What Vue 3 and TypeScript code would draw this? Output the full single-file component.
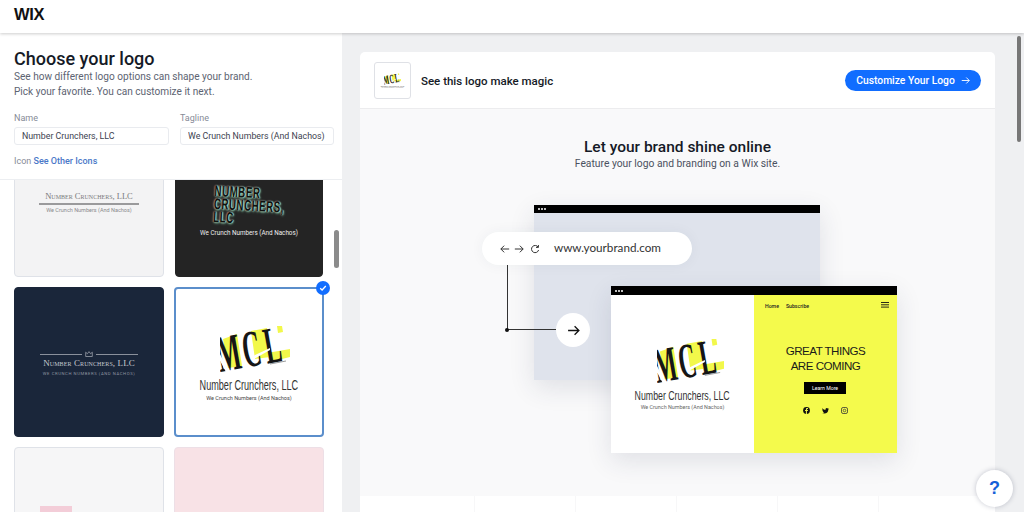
<template>
  <div class="app">
    <svg class="defs" aria-hidden="true">
      <symbol id="mcl" viewBox="0 0 70 46">
        <polygon points="3,13 17,8 22,40 8,42" fill="#f2f84a" />
        <polygon points="31,5 47,2 50,31 35,33" fill="#f2f84a" />
        <polygon points="47,27 70,23 70,31 50,36" fill="#f2f84a" />
        <polygon points="57,0 62,0 63,6 58,7" fill="#f2f84a" />
        <g transform="translate(0 46) rotate(-10) scale(.48 1)">
          <text class="mcl-text" x="0 54 100" y="0">MCL</text>
        </g>
        <polygon points="-2,24 9,46 6,46 -2,31" fill="#fff" />
        <polygon points="31,31 50,22 50,24 32,34" fill="#fff" />
        <line x1="50" y1="38" x2="66" y2="35" stroke="#555" stroke-width=".6" />
      </symbol>
      <symbol id="arrow" viewBox="0 0 12 12">
        <path d="M1 6h10M7 2l4 4-4 4" fill="none" stroke="currentColor" stroke-width="1.2" />
      </symbol>
    </svg>

    <header class="topbar">
      <span class="wix">WIX</span>
    </header>

    <main class="main">
      <aside class="side">
        <div class="intro">
          <h1>Choose your logo</h1>
          <p>See how different logo options can shape your brand.<br />Pick your favorite. You can customize it next.</p>
          <div class="fields">
            <label>
              <span>Name</span>
              <input type="text" value="Number Crunchers, LLC" />
            </label>
            <label>
              <span>Tagline</span>
              <input type="text" value="We Crunch Numbers (And Nachos)" />
            </label>
          </div>
          <div class="icon-row">Icon <a>See Other Icons</a></div>
        </div>

        <div class="list">
          <div class="grid">
            <div class="tile tile-light">
              <div class="serif-name">Number Crunchers, LLC</div>
              <div class="rule"></div>
              <div class="tag">We Crunch Numbers (And Nachos)</div>
            </div>
            <div class="tile tile-dark">
              <div class="glow">NUMBER<br />CRUNCHERS,<br />LLC</div>
              <div class="tag">We Crunch Numbers (And Nachos)</div>
            </div>
            <div class="tile tile-navy">
              <div class="crown-row">
                <span></span>
                <svg width="8" height="7" viewBox="0 0 8 7"><path d="M.7 1.2l1.7 1.6L4 .6l1.6 2.2 1.7-1.6v4.3H.7z" fill="none" stroke="#aeb2ba" stroke-width=".7" /></svg>
                <span></span>
              </div>
              <div class="serif-name">Number Crunchers, LLC</div>
              <div class="tag">WE CRUNCH NUMBERS (AND NACHOS)</div>
            </div>
            <div class="tile tile-picked">
              <svg class="mcl" width="70" height="46"><use href="#mcl" /></svg>
              <div class="narrow-name">Number Crunchers, LLC</div>
              <div class="tag">We Crunch Numbers (And Nachos)</div>
              <span class="check">
                <svg width="8" height="8" viewBox="0 0 8 8"><path d="M1.2 4.2l1.9 1.8 3.7-4" fill="none" stroke="#fff" stroke-width="1.3" /></svg>
              </span>
            </div>
            <div class="tile tile-soft"><div class="pink-box"></div></div>
            <div class="tile tile-pink"></div>
          </div>
          <div class="thumb"></div>
        </div>
      </aside>

      <section class="preview">
        <div class="panel">
          <div class="panel-head">
            <div class="mini">
              <svg width="17" height="12"><use href="#mcl" /></svg>
              <span class="mini-name">Number Crunchers, LLC</span>
              <span class="mini-tag">We Crunch Numbers (And Nachos)</span>
            </div>
            <div class="panel-title">See this logo make magic</div>
            <button class="cta">
              Customize Your Logo
              <svg width="9" height="9"><use href="#arrow" /></svg>
            </button>
          </div>

          <div class="panel-body">
            <h2>Let your brand shine online</h2>
            <p>Feature your logo and branding on a Wix site.</p>

            <div class="stage">
              <div class="win back">
                <div class="win-bar"><i></i><i></i><i></i></div>
              </div>
              <div class="wire"></div>
              <span class="wire-dot"></span>
              <div class="url">
                <svg width="10" height="10"><use href="#arrow" transform="rotate(180 5 5)" /></svg>
                <svg width="10" height="10"><use href="#arrow" /></svg>
                <svg class="reload" width="10" height="10" viewBox="0 0 10 10"><path d="M8.2 3.2A3.6 3.6 0 1 0 8.6 6M8.4 1v2.4H6" fill="none" stroke="#333" stroke-width="1" /></svg>
                <span>www.yourbrand.com</span>
              </div>
              <div class="go"><svg width="13" height="13"><use href="#arrow" /></svg></div>

              <div class="win front">
                <div class="win-bar"><i></i><i></i><i></i></div>
                <div class="site">
                  <div class="site-left">
                    <svg class="site-logo" width="67" height="44"><use href="#mcl" /></svg>
                    <div class="narrow-name">Number Crunchers, LLC</div>
                    <div class="tag">We Crunch Numbers (And Nachos)</div>
                  </div>
                  <div class="site-right">
                    <nav class="site-nav">
                      <span>Home</span><span>Subscribe</span>
                      <svg width="8" height="6" viewBox="0 0 8 6"><path d="M0 .5h8M0 2.8h8M0 5.1h8" stroke="#111" stroke-width=".9" /></svg>
                    </nav>
                    <div class="great">GREAT THINGS<br />ARE COMING</div>
                    <div class="learn">Learn More</div>
                    <div class="socials">
                      <svg width="7" height="7" viewBox="0 0 7 7"><circle cx="3.5" cy="3.5" r="3.4" fill="#111" /><path d="M3.9 7V4h1l.1-1H3.9v-.6c0-.3.1-.5.5-.5H5V1h-.8C3.3 1 2.9 1.5 2.9 2.3V3H2v1h.9v3z" fill="#f2f84a" /></svg>
                      <svg width="7" height="6" viewBox="0 0 7 6"><path d="M7 .8c-.3.1-.5.2-.8.2.3-.2.5-.4.6-.8-.3.2-.6.3-.9.4A1.4 1.4 0 0 0 3.5 1.900C2.300 1.800 1.300 1.300.5.300c-.4.7-.2 1.400.4 1.900-.2 0-.4-.1-.6-.2 0 .7.4 1.200 1.100 1.400-.2.1-.4.1-.6 0 .2.6.7.9 1.300 1-.6.5-1.300.7-2.100.6C3.800 6.200 6.400 4.500 6.300 1.500c.3-.2.5-.4.7-.7z" fill="#111" /></svg>
                      <svg width="7" height="7" viewBox="0 0 7 7"><rect x=".5" y=".5" width="6" height="6" rx="1.6" fill="none" stroke="#333" stroke-width=".8" /><circle cx="3.5" cy="3.5" r="1.3" fill="none" stroke="#333" stroke-width=".7" /></svg>
                    </div>
                  </div>
                </div>
              </div>
            </div>
          </div>

          <div class="panel-foot">
            <span v-for="n in ticks" :key="n" class="tick"></span>
          </div>
        </div>
        <div class="page-thumb"></div>
      </section>
    </main>

    <button class="help">?</button>
  </div>
</template>

<script setup lang="ts">
const ticks: number = 6;
</script>

<style>
html,
body {
  margin: 0;
  overflow: hidden;
  background: #fff;
}
</style>

<style scoped>
.app {
  position: relative;
  width: 1024px;
  height: 512px;
  overflow: hidden;
  display: flex;
  flex-direction: column;
  font-family: Roboto, "Noto Sans", sans-serif;
  color: #151a26;
}
.defs {
  display: none;
}
.mcl-text {
  font-family: "Liberation Serif", serif;
  font-weight: 700;
  font-size: 52px;
  fill: #161616;
}
.topbar {
  height: 33px;
  flex: none;
  display: flex;
  align-items: center;
  padding-left: 14px;
  padding-bottom: 5px;
  box-sizing: border-box;
  background: #fff;
  box-shadow: 0 1px 3px rgba(0, 0, 0, 0.2);
  position: relative;
  z-index: 2;
}
.wix {
  font-family: "Liberation Sans", sans-serif;
  font-weight: 700;
  font-size: 16.5px;
  letter-spacing: -0.3px;
  color: #111;
}
.main {
  flex: 1;
  display: flex;
  min-height: 0;
}
.side {
  width: 342px;
  flex: none;
  background: #fff;
  display: flex;
  flex-direction: column;
}
.intro {
  padding: 16px 8px 0 14px;
  height: 147px;
  box-sizing: border-box;
  flex: none;
  border-bottom: 1px solid #eceef1;
}
h1 {
  margin: 0;
  font-size: 18px;
  line-height: 20px;
  font-weight: 500;
}
.intro p {
  margin: 1px 0 0;
  font-size: 10.1px;
  line-height: 14.5px;
  color: #5d6472;
}
.fields {
  display: grid;
  grid-template-columns: 155px 154px;
  gap: 11px;
  margin-top: 14px;
}
.fields label {
  display: flex;
  flex-direction: column;
  gap: 3px;
}
.fields span,
.icon-row {
  font-size: 9px;
  line-height: 11px;
  color: #868b97;
}
.fields input {
  height: 18px;
  box-sizing: border-box;
  width: 100%;
  border: 1px solid #e9ebef;
  border-radius: 3px;
  padding: 0 7px;
  font-family: inherit;
  font-size: 8.8px;
  color: #3c4250;
  background: #fff;
  outline: none;
}
.icon-row {
  margin-top: 11px;
}
.icon-row a {
  color: #4a78c8;
  font-weight: 500;
}
.list {
  position: relative;
  flex: 1;
  overflow: hidden;
  padding-left: 14px;
}
.grid {
  display: grid;
  grid-template-columns: 150px 150px;
  grid-auto-rows: 150px;
  gap: 10px;
  margin-top: -53px;
}
.tile {
  position: relative;
  box-sizing: border-box;
  border-radius: 4px;
  border: 1px solid #dfe2e8;
  display: flex;
  flex-direction: column;
  align-items: center;
}
.tag {
  font-size: 5.5px;
  line-height: 7px;
  white-space: nowrap;
}
.serif-name {
  font-family: "Liberation Serif", serif;
  font-variant: small-caps;
  white-space: nowrap;
}
.narrow-name {
  font-family: "Liberation Sans", sans-serif;
  white-space: nowrap;
  color: #333;
  transform: scaleX(0.65);
}
.tile-light {
  background: #f3f3f4;
  padding-top: 61px;
}
.tile-light .serif-name {
  font-size: 8.5px;
  line-height: 12px;
  color: #7a7a7c;
  margin-top: 1px;
}
.rule {
  width: 100px;
  height: 2px;
  margin: 1px 0 2px;
  background: #9a9a9c;
}
.tile-light .tag {
  color: #8a8a8c;
}
.tile-dark {
  background: #242424;
  border-color: #242424;
  padding-top: 56px;
  margin: 0 1px;
}
.glow {
  align-self: flex-start;
  margin-left: 39px;
  width: 100px;
  font-family: "Liberation Sans", sans-serif;
  font-weight: 700;
  font-size: 15.5px;
  line-height: 13px;
  letter-spacing: 1px;
  color: #0f1110;
  white-space: nowrap;
  transform-origin: left top;
  transform: rotate(3deg) scaleX(0.62);
  text-shadow: 1.5px 0 1.5px #b4ecd0, 1px 1px 3px #7fcfa8, -1px 0 2px #c07a84;
}
.tile-dark .tag {
  color: #eee;
  font-size: 6.3px;
  margin-top: 7px;
}
.tile-navy {
  background: #1a263a;
  border-color: #1a263a;
  padding-top: 63px;
}
.crown-row {
  display: flex;
  align-items: center;
  gap: 3px;
}
.crown-row span {
  width: 42px;
  height: 1px;
  background: #8a909b;
}
.tile-navy .serif-name {
  font-size: 9px;
  line-height: 11px;
  color: #c4c8cf;
  letter-spacing: 0.1px;
}
.tile-navy .tag {
  font-size: 4.2px;
  line-height: 8px;
  margin-top: 1px;
  letter-spacing: 0.6px;
  color: #8f95a1;
}
.tile-picked {
  background: #fff;
  border: 2px solid #5b8ecb;
  padding-top: 37px;
}
.mcl {
  flex: none;
  margin-left: 12px;
}
.tile-picked .narrow-name {
  font-size: 14px;
  line-height: 16px;
  margin-top: 5px;
}
.tile-picked .tag {
  color: #444;
  margin-top: 2px;
}
.check {
  position: absolute;
  top: -8px;
  right: -8px;
  width: 14px;
  height: 14px;
  border-radius: 50%;
  background: #116dff;
  display: flex;
  align-items: center;
  justify-content: center;
}
.tile-soft {
  background: #f6f6f7;
  align-items: flex-start;
  padding: 58px 0 0 25px;
}
.pink-box {
  width: 32px;
  height: 32px;
  background: #f3cdd8;
}
.tile-pink {
  background: #f8e2e6;
  border-color: #eddfe6;
}
.thumb {
  position: absolute;
  left: 334px;
  top: 50px;
  width: 5px;
  height: 38px;
  border-radius: 3px;
  background: #8b8b8b;
}
.preview {
  position: relative;
  flex: 1;
  background: #eff0f2;
  padding: 19px 29px 0 18px;
  overflow: hidden;
}
.page-thumb {
  position: absolute;
  top: 3px;
  right: 3px;
  width: 4px;
  height: 106px;
  border-radius: 3px;
  background: #777;
}
.panel {
  border-radius: 5px 5px 0 0;
  overflow: hidden;
  background: #fff;
}
.panel-head {
  height: 57px;
  box-sizing: border-box;
  display: flex;
  align-items: center;
  padding: 0 14px;
  border-bottom: 1px solid #ececee;
}
.mini {
  width: 37px;
  height: 37px;
  box-sizing: border-box;
  border: 1px solid #dfe1e6;
  border-radius: 3px;
  display: flex;
  flex-direction: column;
  align-items: center;
  padding-top: 10px;
  overflow: hidden;
}
.mini-name,
.mini-tag {
  font-family: "Liberation Sans", sans-serif;
  line-height: 2.5px;
  white-space: nowrap;
  color: #555;
}
.mini-name {
  font-size: 2.2px;
}
.mini-tag {
  font-size: 1.4px;
  color: #888;
}
.panel-title {
  margin-left: 10px;
  padding-top: 1px;
  font-size: 11.5px;
  font-weight: 500;
  flex: 1;
}
.cta {
  height: 21px;
  width: 136px;
  border: none;
  border-radius: 11px;
  background: #116dff;
  color: #fff;
  display: flex;
  align-items: center;
  justify-content: center;
  gap: 6px;
  font-family: inherit;
  font-size: 10.3px;
  font-weight: 500;
  padding: 0;
}
.panel-body {
  height: 387px;
  background: #f9f9fa;
  padding-top: 29px;
  box-sizing: border-box;
  display: flex;
  flex-direction: column;
  text-align: center;
}
h2 {
  margin: 0;
  font-size: 15.5px;
  line-height: 18px;
  font-weight: 500;
}
.panel-body p {
  margin: 1px 0 0;
  font-size: 10.3px;
  line-height: 14px;
  color: #4b5160;
}
.stage {
  position: relative;
  margin-top: 34px;
  flex: 1;
  text-align: left;
}
.win {
  position: absolute;
  width: 286px;
  box-shadow: 0 8px 24px rgba(40, 50, 80, 0.12);
}
.back {
  left: 174px;
  top: 0;
  height: 175px;
  background: #dfe3ec;
}
.front {
  left: 251px;
  top: 81px;
  height: 167px;
  display: flex;
  flex-direction: column;
}
.win-bar {
  height: 8px;
  background: #000;
  display: flex;
  align-items: center;
  gap: 1px;
  padding-left: 4px;
}
.win-bar i {
  width: 2px;
  height: 2px;
  border-radius: 50%;
  background: #fff;
}
.front .win-bar {
  height: 9px;
}
.url {
  position: absolute;
  left: 122px;
  top: 27px;
  width: 210px;
  height: 33px;
  box-sizing: border-box;
  border-radius: 17px;
  background: #fff;
  box-shadow: 0 0 14px rgba(40, 50, 80, 0.05);
  display: flex;
  align-items: center;
  padding-left: 18px;
  gap: 4px;
  color: #333;
}
.reload {
  margin-left: 2px;
}
.url span {
  margin: 0 0 3px 10px;
  font-family: Lato, sans-serif;
  font-size: 11.7px;
  color: #333;
}
.wire {
  position: absolute;
  left: 147px;
  top: 60px;
  width: 49px;
  height: 65px;
  box-sizing: border-box;
  border-left: 1px solid #333;
  border-bottom: 1px solid #333;
}
.wire-dot {
  position: absolute;
  left: 145px;
  top: 123px;
  width: 4px;
  height: 4px;
  border-radius: 50%;
  background: #111;
}
.go {
  position: absolute;
  left: 196px;
  top: 108px;
  width: 34px;
  height: 34px;
  border-radius: 50%;
  background: #fff;
  display: flex;
  align-items: center;
  justify-content: center;
  color: #111;
}
.site {
  flex: 1;
  display: flex;
}
.site-left {
  width: 143px;
  background: #fff;
  display: flex;
  flex-direction: column;
  align-items: center;
  padding-top: 44px;
  box-sizing: border-box;
}
.site-logo {
  flex: none;
  margin-left: 16px;
}
.site-left .narrow-name {
  font-size: 13.5px;
  line-height: 14px;
  margin-top: 6px;
}
.site-left .tag {
  font-size: 5.4px;
  line-height: 6px;
  margin-top: 1px;
  color: #666;
}
.site-right {
  flex: 1;
  background: #f4fa4c;
  display: flex;
  flex-direction: column;
  align-items: center;
}
.site-nav {
  align-self: stretch;
  display: flex;
  align-items: center;
  gap: 7px;
  padding: 8px 8px 0 11px;
  font-size: 5.2px;
  line-height: 6px;
  font-weight: 500;
  color: #222;
}
.site-nav svg {
  margin-left: auto;
  margin-top: -3px;
}
.great {
  margin-top: 34px;
  font-family: "Liberation Sans", sans-serif;
  font-size: 11.6px;
  line-height: 15px;
  letter-spacing: -0.5px;
  text-align: center;
  color: #1a1a1a;
}
.learn {
  margin-top: 9px;
  margin-right: 1px;
  width: 42px;
  height: 12px;
  background: #000;
  color: #fff;
  font-size: 5.2px;
  line-height: 12px;
  text-align: center;
}
.socials {
  margin-top: 13px;
  display: flex;
  align-items: center;
  gap: 12px;
}
.panel-foot {
  height: 40px;
  display: grid;
  grid-template-columns: 115px repeat(5, 101px);
  background: #fff;
}
.tick {
  border-right: 1px solid #f7f7f8;
}
.tick:last-child {
  border-right: none;
}
.help {
  position: absolute;
  left: 976px;
  top: 470px;
  width: 37px;
  height: 37px;
  border: none;
  border-radius: 50%;
  background: #fff;
  box-shadow: 0 0 5px rgba(30, 40, 70, 0.25);
  color: #1461d8;
  font-family: "Liberation Sans", sans-serif;
  font-size: 18px;
  font-weight: 700;
  padding: 0;
}
</style>
